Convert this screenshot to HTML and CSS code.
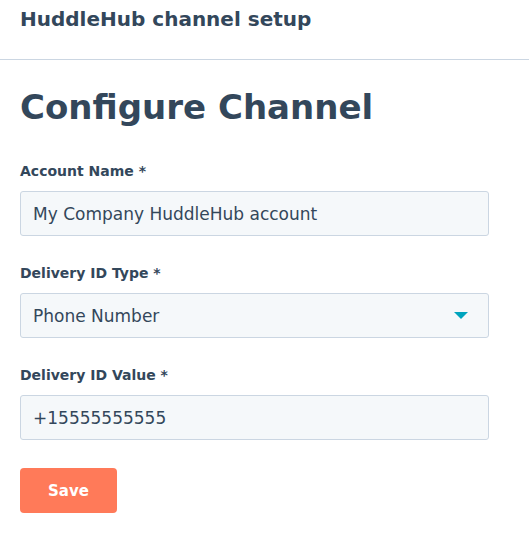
FILE: index.html
```html
<!DOCTYPE html>
<html>
<head>
<link rel="stylesheet" href="styles.css">
</head>
<body>
    <div class="topbar">
        <span class="topbar-title">HuddleHub channel setup</span>
    </div>

    <div class="content">
        <h1 class="page-title">Configure Channel</h1>

        <form class="channel-form">
            <div class="field">
                <label class="field-label" for="accountName">Account Name *</label>
                <input class="field-input" id="accountName" type="text" value="My Company HuddleHub account">
            </div>

            <div class="field">
                <label class="field-label" for="deliveryType">Delivery ID Type *</label>
                <div class="field-input select">
                    <span id="deliveryType">Phone Number</span>
                    <span class="caret"></span>
                </div>
            </div>

            <div class="field">
                <label class="field-label" for="deliveryValue">Delivery ID Value *</label>
                <input class="field-input" id="deliveryValue" type="text" value="+15555555555">
            </div>

            <button class="button" type="button">Save</button>
        </form>
    </div>
</body>
</html>
```

FILE: styles.css
```css
body {
    margin: 0;
    background-color: #ffffff;
    color: #33475b;
    font-family: "DejaVu Sans", "Noto Sans", sans-serif;
}

.topbar {
    height: 60px;
    padding: 0 20px;
    border-bottom: 1px solid #cbd6e2;
    box-sizing: border-box;
}

.topbar-title {
    display: block;
    padding-top: 4px;
    font-size: 20px;
    font-weight: 700;
    line-height: 30px;
}

.content {
    padding: 0 20px;
}

.page-title {
    margin: 22px 0 0 0;
    font-size: 34px;
    font-weight: 700;
    line-height: 50px;
}

.channel-form {
    display: flex;
    flex-direction: column;
    align-items: flex-start;
    margin-top: 29px;
}

.field {
    display: flex;
    flex-direction: column;
    width: 469px;
    margin-bottom: 27px;
}

.field-label {
    font-size: 14px;
    font-weight: 700;
    line-height: 20px;
    margin-bottom: 10px;
}

.field-input {
    box-sizing: border-box;
    width: 100%;
    height: 45px;
    padding: 0 12px;
    background-color: #f5f8fa;
    border: 1px solid #cbd6e2;
    border-radius: 3px;
    color: #33475b;
    font-family: inherit;
    font-size: 17px;
    outline: none;
}

.select {
    display: flex;
    align-items: center;
    justify-content: space-between;
    padding-right: 20px;
}

.caret {
    width: 0;
    height: 0;
    border-left: 7px solid transparent;
    border-right: 7px solid transparent;
    border-top: 7px solid #00a4bd;
}

.button {
    width: 97px;
    height: 45px;
    margin-top: 1px;
    background-color: #ff7a59;
    border: 0;
    border-radius: 4px;
    color: #ffffff;
    font-family: inherit;
    font-size: 15px;
    font-weight: 700;
    cursor: pointer;
}
```
